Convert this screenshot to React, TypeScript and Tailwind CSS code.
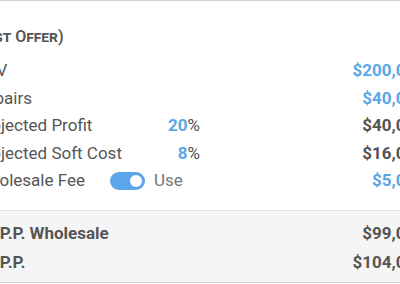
import React from 'react';

const font = { fontFamily: 'Roboto, "Liberation Sans", sans-serif' };

const Toggle: React.FC = () => (
  <div className="w-[35px] h-[18px] rounded-full bg-[#5ba6e8] flex items-center justify-end px-[3px]">
    <div className="w-[12px] h-[12px] rounded-full bg-white" />
  </div>
);

const App: React.FC = () => {
  return (
    <div className="w-[400px] h-[284px] overflow-hidden bg-white" style={font}>
      <div className="h-[283px] border-t border-b border-[#cfcfcf] flex flex-col">
        <div className="ml-[-25px] w-[450px] flex flex-col">
          <div className="ml-[-44px] pt-[26px] h-[56px] text-[16px] font-semibold text-[#555] [font-variant:small-caps] leading-[20px] whitespace-nowrap">
            MAO (Best Offer)
          </div>
          <div className="flex flex-col text-[17px] text-[#555]">
            <div className="h-[27.5px] flex items-center justify-between">
              <span>ARV</span>
              <span className="font-bold text-[#5aa7e8]">$200,000</span>
            </div>
            <div className="h-[27.5px] flex items-center justify-between">
              <span>Repairs</span>
              <span className="font-bold text-[#5aa7e8]">$40,000</span>
            </div>
            <div className="h-[27.5px] flex items-center">
              <span className="w-[180px]">Projected Profit</span>
              <span className="w-[45px] text-right"><span className="font-bold text-[#5aa7e8]">20</span>%</span>
              <span className="ml-auto font-bold">$40,000</span>
            </div>
            <div className="h-[27.5px] flex items-center">
              <span className="w-[180px] whitespace-nowrap">Projected Soft Cost</span>
              <span className="w-[45px] text-right"><span className="font-bold text-[#5aa7e8]">8</span>%</span>
              <span className="ml-auto font-bold">$16,000</span>
            </div>
            <div className="h-[27.5px] flex items-center">
              <span className="w-[135px]">Wholesale Fee</span>
              <Toggle />
              <span className="ml-[9px] text-[#777]">Use</span>
              <span className="ml-auto font-bold text-[#5aa7e8]">$5,000</span>
            </div>
          </div>
        </div>
        <div className="mt-auto h-[72px] bg-[#f5f5f5] border-t border-[#e4e4e4]">
          <div className="ml-[-20px] w-[445px] pt-[8px] flex flex-col text-[17px] font-bold text-[#555]">
            <div className="h-[29px] flex items-center justify-between">
              <span>M.P.P. Wholesale</span>
              <span>$99,000</span>
            </div>
            <div className="h-[29px] flex items-center justify-between">
              <span>M.P.P.</span>
              <span>$104,000</span>
            </div>
          </div>
        </div>
      </div>
    </div>
  );
};

export default App;
